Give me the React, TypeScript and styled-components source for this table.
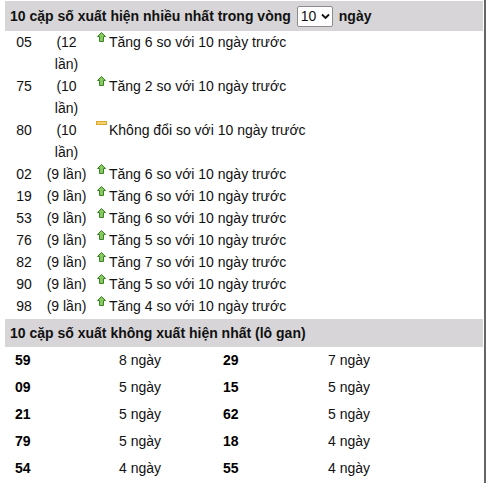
import React from 'react';
import styled, { createGlobalStyle } from 'styled-components';

const GlobalStyle = createGlobalStyle`
  html, body {
    margin: 0;
    padding: 0;
    background: #fff;
  }
  body {
    font-family: "Liberation Sans", Arial, sans-serif;
    font-size: 14px;
    color: #111;
  }
`;

const Page = styled.div`
  width: 479px;
  min-height: 483px;
  padding: 1px 0 0 5px;
  border-right: 2px solid #666;
  box-sizing: content-box;
`;

const Header = styled.div<{ $gap?: number }>`
  display: flex;
  align-items: center;
  gap: 6px;
  height: ${({ $gap }) => ($gap ? 28 : 30)}px;
  margin-top: ${({ $gap }) => $gap ?? 0}px;
  padding-left: 5px;
  margin-right: 1px;
  background: #d7d5d7;
  font-weight: 700;
  color: #111;
`;

const SelectWrap = styled.span`
  position: relative;
  display: inline-flex;
`;

const Select = styled.select`
  appearance: none;
  width: 36px;
  height: 21px;
  padding: 0 0 0 3px;
  border: 1px solid #8c8c8c;
  border-radius: 2px;
  background: #fff;
  font-family: "Liberation Sans", Arial, sans-serif;
  font-size: 14px;
  color: #111;
`;

const Chevron = styled.svg`
  position: absolute;
  right: 3px;
  top: 7px;
  pointer-events: none;
`;

const FreqTable = styled.table`
  border-collapse: collapse;
  table-layout: fixed;
  width: 330px;
`;

const Cell = styled.td<{ $w?: number; $center?: boolean }>`
  width: ${({ $w }) => ($w ? `${$w}px` : 'auto')};
  padding: 0;
  line-height: 22px;
  vertical-align: top;
  text-align: ${({ $center }) => ($center ? 'center' : 'left')};
  color: #111;
`;

const Trend = styled.div`
  display: flex;
  align-items: flex-start;
  padding-left: 6px;
  white-space: nowrap;
`;

const IconBox = styled.span`
  display: inline-flex;
  width: 13px;
  height: 22px;
  flex: none;
`;

const GanGrid = styled.div`
  display: grid;
  grid-template-columns: 104px 104px 105px 104px;
  padding-left: 10px;
`;

const GanCell = styled.div<{ $bold?: boolean }>`
  height: 27px;
  line-height: 27px;
  font-weight: ${({ $bold }) => ($bold ? 700 : 400)};
  color: ${({ $bold }) => ($bold ? '#000' : '#111')};
`;

const UpIcon = () => (
  <svg width="10" height="11" viewBox="0 0 10 11" style={{ marginTop: 1, marginLeft: 1 }}>
    <path
      d="M4.5 0.5 L8.5 4.5 H6.5 V9.5 H2.5 V4.5 H0.5 Z"
      fill="#86c95c"
      stroke="#3a8226"
      strokeWidth="1"
    />
  </svg>
);

const SameIcon = () => (
  <svg width="12" height="6" viewBox="0 0 12 6" style={{ marginTop: 2 }}>
    <rect x="0.5" y="0.5" width="10" height="3" fill="#f5d169" stroke="#d9a82e" />
  </svg>
);

type Row = { num: string; times: string; dir: 'up' | 'same'; text: string };

const rows: Row[] = [
  { num: '05', times: '(12 lần)', dir: 'up', text: 'Tăng 6 so với 10 ngày trước' },
  { num: '75', times: '(10 lần)', dir: 'up', text: 'Tăng 2 so với 10 ngày trước' },
  { num: '80', times: '(10 lần)', dir: 'same', text: 'Không đổi so với 10 ngày trước' },
  { num: '02', times: '(9 lần)', dir: 'up', text: 'Tăng 6 so với 10 ngày trước' },
  { num: '19', times: '(9 lần)', dir: 'up', text: 'Tăng 6 so với 10 ngày trước' },
  { num: '53', times: '(9 lần)', dir: 'up', text: 'Tăng 6 so với 10 ngày trước' },
  { num: '76', times: '(9 lần)', dir: 'up', text: 'Tăng 5 so với 10 ngày trước' },
  { num: '82', times: '(9 lần)', dir: 'up', text: 'Tăng 7 so với 10 ngày trước' },
  { num: '90', times: '(9 lần)', dir: 'up', text: 'Tăng 5 so với 10 ngày trước' },
  { num: '98', times: '(9 lần)', dir: 'up', text: 'Tăng 4 so với 10 ngày trước' },
];

const gan: [string, string][] = [
  ['59', '8 ngày'],
  ['29', '7 ngày'],
  ['09', '5 ngày'],
  ['15', '5 ngày'],
  ['21', '5 ngày'],
  ['62', '5 ngày'],
  ['79', '5 ngày'],
  ['18', '4 ngày'],
  ['54', '4 ngày'],
  ['55', '4 ngày'],
];

export default function App() {
  return (
    <Page>
      <GlobalStyle />
      <Header>
        <span>10 cặp số xuất hiện nhiều nhất trong vòng</span>
        <SelectWrap>
          <Select defaultValue="10">
            <option value="10">10</option>
            <option value="20">20</option>
            <option value="30">30</option>
          </Select>
          <Chevron width="9" height="7" viewBox="0 0 9 7">
            <path d="M1 1.5 L4.5 5 L8 1.5" fill="none" stroke="#111" strokeWidth="1.8" />
          </Chevron>
        </SelectWrap>
        <span>ngày</span>
      </Header>
      <FreqTable>
        <tbody>
          {rows.map((r) => (
            <tr key={r.num}>
              <Cell $w={38} $center>
                {r.num}
              </Cell>
              <Cell $w={47} $center>
                {r.times}
              </Cell>
              <Cell>
                <Trend>
                  <IconBox>{r.dir === 'up' ? <UpIcon /> : <SameIcon />}</IconBox>
                  <span>{r.text}</span>
                </Trend>
              </Cell>
            </tr>
          ))}
        </tbody>
      </FreqTable>
      <Header $gap={2}>
        <span>10 cặp số xuất không xuất hiện nhất (lô gan)</span>
      </Header>
      <GanGrid>
        {gan.map(([n, d]) => (
          <React.Fragment key={n}>
            <GanCell $bold>{n}</GanCell>
            <GanCell>{d}</GanCell>
          </React.Fragment>
        ))}
      </GanGrid>
    </Page>
  );
}
